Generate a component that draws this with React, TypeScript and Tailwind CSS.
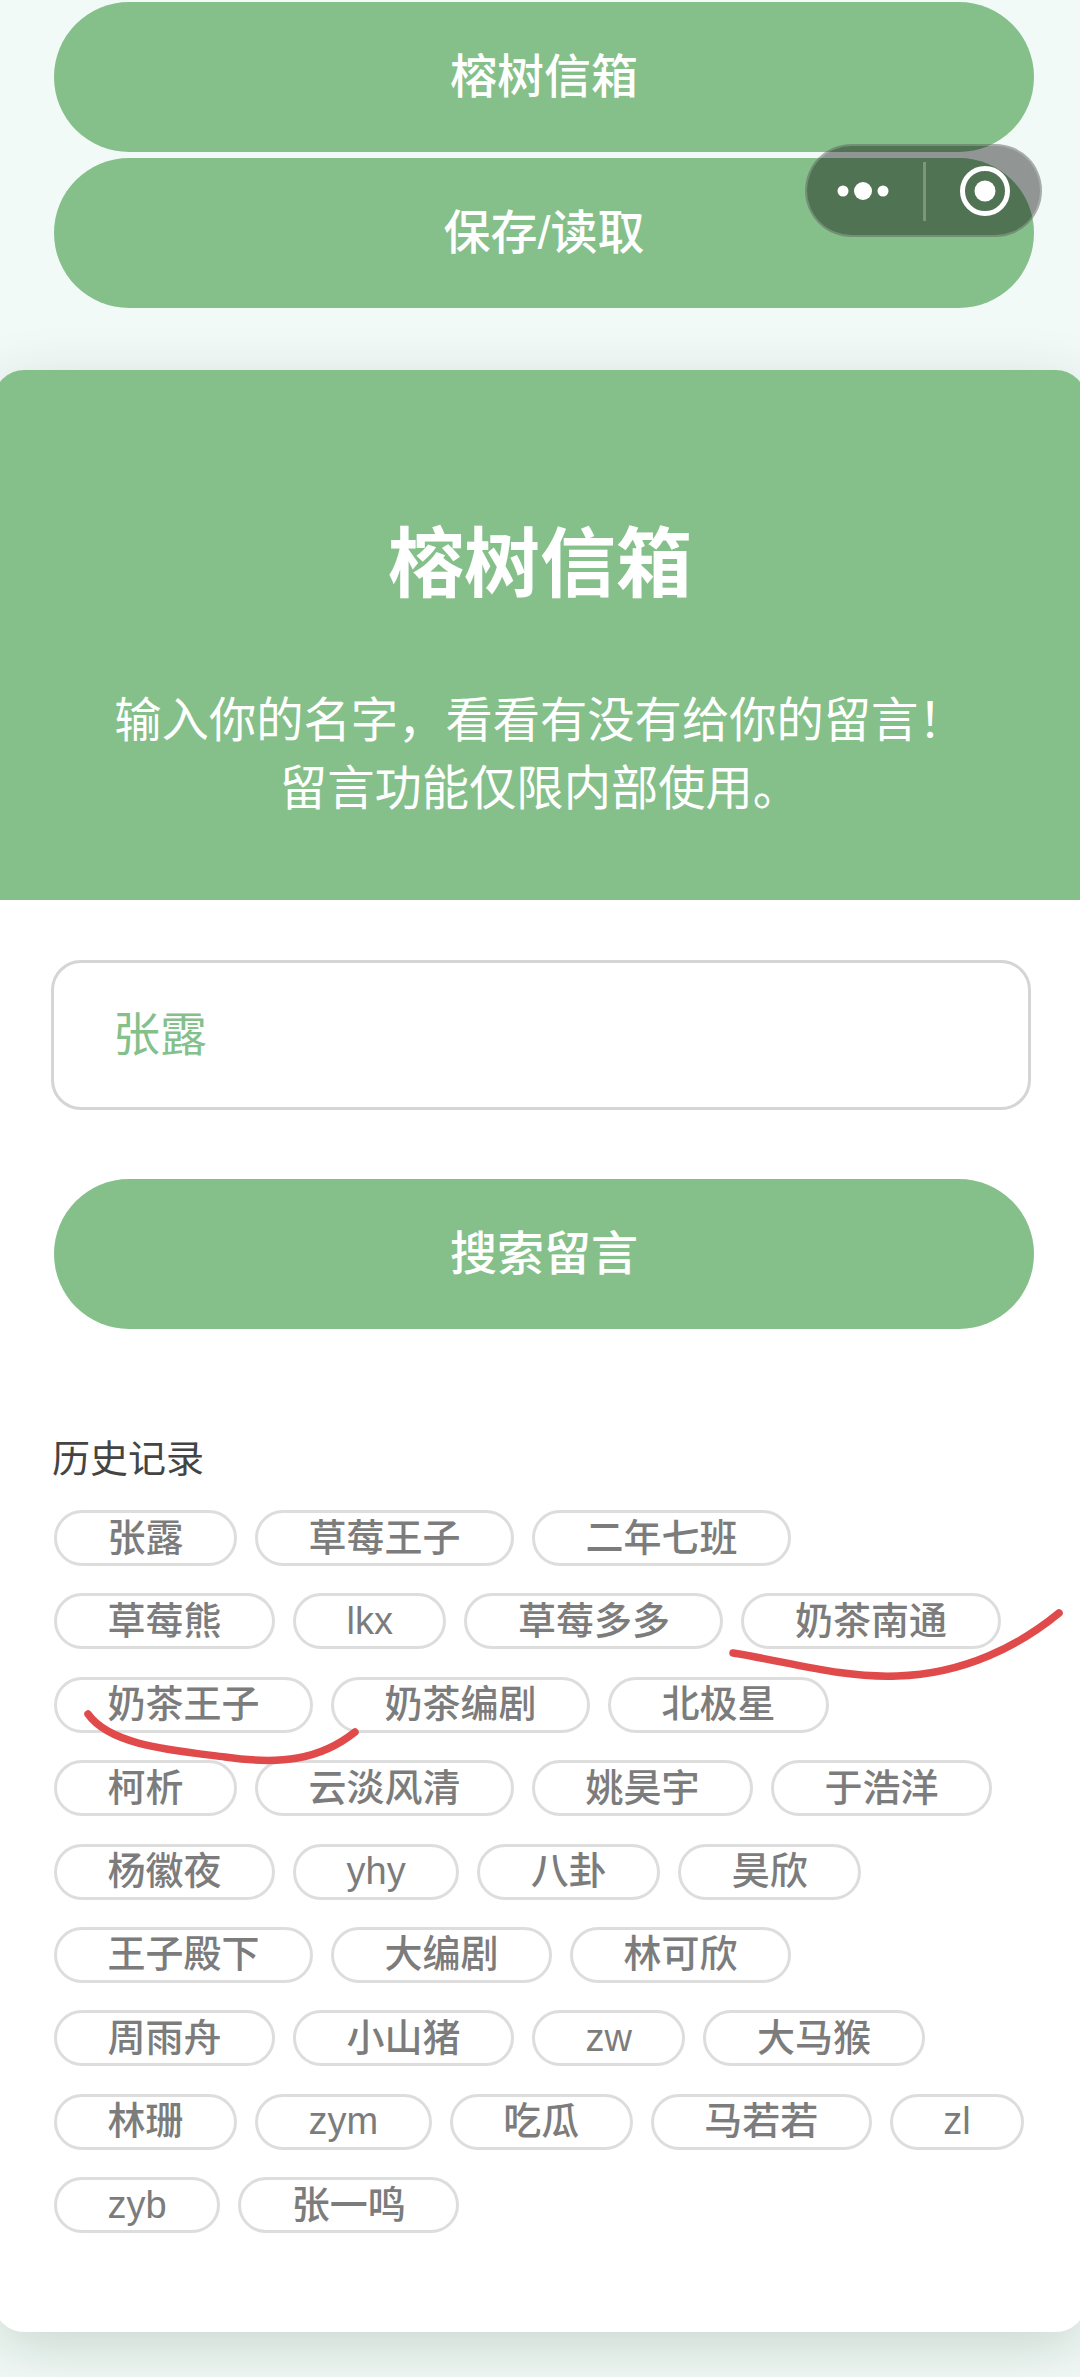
import React from 'react';

const history = [
  '张露', '草莓王子', '二年七班', '草莓熊', 'lkx', '草莓多多', '奶茶南通', '奶茶王子', '奶茶编剧', '北极星',
  '柯析', '云淡风清', '姚昊宇', '于浩洋', '杨徽夜', 'yhy', '八卦', '昊欣', '王子殿下', '大编剧', '林可欣',
  '周雨舟', '小山猪', 'zw', '大马猴', '林珊', 'zym', '吃瓜', '马若若', 'zl', 'zyb', '张一鸣',
];

function GreenButton({ label, className = '' }: { label: string; className?: string }) {
  return (
    <button className={`mx-[54px] flex h-[150px] w-[980px] items-center justify-center rounded-[75px] bg-[#85c08a] text-[47px] font-medium text-white ${className}`}>
      {label}
    </button>
  );
}

function MenuCapsule() {
  return (
    <div className="absolute left-[805px] top-[144px] h-[93px] w-[237px] rounded-[47px] border-2 border-white/20 bg-black/40">
      <svg viewBox="0 0 233 89" className="h-full w-full">
        <circle cx="36" cy="45" r="5.5" fill="#fff" />
        <circle cx="56" cy="45" r="9" fill="#fff" />
        <circle cx="76" cy="45" r="5.5" fill="#fff" />
        <rect x="116" y="16" width="3" height="59" fill="#fff" fillOpacity="0.25" />
        <circle cx="178" cy="45" r="22.5" fill="none" stroke="#fff" strokeWidth="5" />
        <circle cx="178" cy="45" r="10.5" fill="#fff" />
      </svg>
    </div>
  );
}

export default function App() {
  return (
    <div className="relative h-[2377px] w-[1080px] overflow-hidden bg-[#f2faf7] pt-[2px] font-['Liberation_Sans','Noto_Sans_CJK_SC',sans-serif]">
      <GreenButton label="榕树信箱" />
      <GreenButton label="保存/读取" className="mt-[6px]" />

      <div className="mt-[62px] -ml-[6px] w-[1092px] overflow-hidden rounded-[30px] bg-white shadow-[0_16px_60px_rgba(0,40,20,0.17)]">
        <div className="flex h-[530px] flex-col items-center bg-[#85c08a] text-white">
          <h1 className="mt-[148px] text-[76px] leading-[94px] font-bold">榕树信箱</h1>
          <p className="mt-[75px] text-center text-[47.3px] leading-[68px]">
            输入你的名字，看看有没有给你的留言！
            <br />
            留言功能仅限内部使用。
          </p>
        </div>

        <div className="px-[6px] pt-[60px] pb-[99px]">
          <div className="mx-[51px] flex h-[150px] w-[980px] items-center rounded-[30px] border-[3px] border-[#d5d5d8] pl-[59px] text-[47px] text-[#85c08a]">
            张露
          </div>
          <GreenButton label="搜索留言" className="mt-[69px]" />

          <div className="mt-[100px] pl-[52px] text-[38px] leading-[60px] text-[#444444]">历史记录</div>
          <div className="mt-[21px] flex w-[1026px] flex-wrap gap-x-[18px] gap-y-[27.4px] pl-[54px]">
            {history.map((name) => (
              <span
                key={name}
                className="flex h-[56px] items-center rounded-[28px] border-[3px] border-[#dddddd] px-[50.5px] text-[38px] font-medium text-[#7c7c7c]"
              >
                {name}
              </span>
            ))}
          </div>
        </div>
      </div>

      <MenuCapsule />

      {/* red pen marks drawn over the screenshot */}
      <svg viewBox="0 0 1080 2377" className="pointer-events-none absolute top-0 left-0 h-[2377px] w-[1080px]">
        <path d="M733 1653 C790 1662 840 1678 897 1676 C965 1674 1020 1645 1059 1613" fill="none" stroke="#e04a4a" strokeWidth="7.5" strokeLinecap="round" />
        <path d="M88 1714 C110 1745 170 1750 225 1757 C280 1765 320 1760 355 1732" fill="none" stroke="#e04a4a" strokeWidth="7.5" strokeLinecap="round" />
      </svg>
    </div>
  );
}
